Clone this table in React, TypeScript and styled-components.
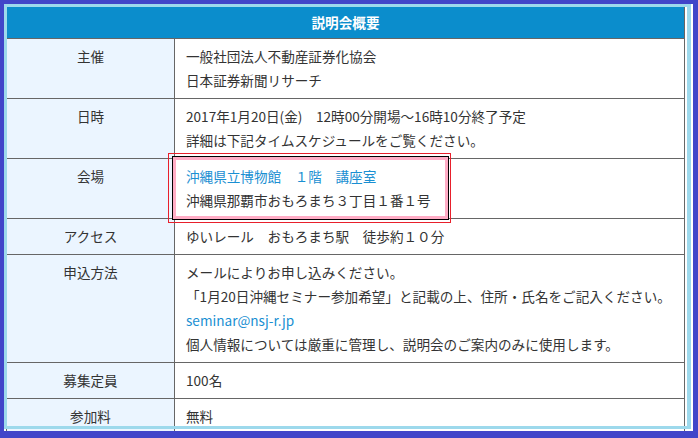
import React from "react";
import styled, { createGlobalStyle } from "styled-components";

const Global = createGlobalStyle`
  html, body { margin: 0; padding: 0; }
  body {
    background: #4145c9;
    font-family: "Noto Sans CJK JP", "Noto Sans", sans-serif;
  }
`;

const Frame = styled.div`
  width: 698px;
  height: 438px;
  box-sizing: border-box;
  background: #4145c9;
  padding: 4px 5px 7px 4px;
`;

const Viewport = styled.div`
  position: relative;
  width: 689px;
  height: 427px;
  background: #ffffff;
  overflow: hidden;
`;

const Ring = styled.div`
  position: absolute;
  left: 0;
  top: 0;
  width: 687px;
  height: 425px;
  box-sizing: border-box;
  border: 3px solid #9dd9ec;
  border-right-width: 4px;
  pointer-events: none;
`;

const Table = styled.table`
  margin: 2px 0 0 2px;
  width: 679px;
  border-collapse: collapse;
  font-size: 13.6px;
  color: #333333;
  border: 1px solid #666666;
`;

const HeadCell = styled.th`
  background: #0b8dcc;
  color: #ffffff;
  font-weight: bold;
  text-align: center;
  line-height: 24px;
  padding: 3px 0 4px;
  border: 1px solid #666666;
`;

const Label = styled.th`
  width: 145px;
  background: #ebf5ff;
  font-weight: normal;
  text-align: center;
  vertical-align: top;
  line-height: 24px;
  padding: 5px 11px 6px;
  border: 1px solid #666666;
`;

const Value = styled.td`
  background: #ffffff;
  text-align: left;
  vertical-align: top;
  line-height: 24px;
  padding: 5px 11px 6px;
  border: 1px solid #666666;
`;

const Line = styled.div<{ $link?: boolean }>`
  color: ${(p) => (p.$link ? "#1a8fd2" : "#333333")};
  white-space: nowrap;
`;

const Highlight = styled.div`
  position: relative;
  display: inline-block;

  &::before {
    content: "";
    position: absolute;
    left: -13px;
    right: -17px;
    top: -7px;
    bottom: -7px;
    border: 3px solid #ffadc6;
    box-shadow: 0 0 0 1px #000000;
    pointer-events: none;
  }

  &::after {
    content: "";
    position: absolute;
    left: -18px;
    right: -20px;
    top: -11px;
    bottom: -11px;
    border: 1px solid #e8202c;
    pointer-events: none;
  }
`;

type Row = { label: string; lines: { text: string; link?: boolean }[]; highlight?: boolean };

const rows: Row[] = [
  { label: "主催", lines: [{ text: "一般社団法人不動産証券化協会" }, { text: "日本証券新聞リサーチ" }] },
  {
    label: "日時",
    lines: [
      { text: "2017年1月20日(金)　12時00分開場～16時10分終了予定" },
      { text: "詳細は下記タイムスケジュールをご覧ください。" },
    ],
  },
  {
    label: "会場",
    highlight: true,
    lines: [
      { text: "沖縄県立博物館　１階　講座室", link: true },
      { text: "沖縄県那覇市おもろまち３丁目１番１号" },
    ],
  },
  { label: "アクセス", lines: [{ text: "ゆいレール　おもろまち駅　徒歩約１０分" }] },
  {
    label: "申込方法",
    lines: [
      { text: "メールによりお申し込みください。" },
      { text: "「1月20日沖縄セミナー参加希望」と記載の上、住所・氏名をご記入ください。" },
      { text: "seminar@nsj-r.jp", link: true },
      { text: "個人情報については厳重に管理し、説明会のご案内のみに使用します。" },
    ],
  },
  { label: "募集定員", lines: [{ text: "100名" }] },
  { label: "参加料", lines: [{ text: "無料" }] },
];

export default function App() {
  return (
    <>
      <Global />
      <Frame>
        <Viewport>
          <Table>
            <thead>
              <tr>
                <HeadCell colSpan={2}>説明会概要</HeadCell>
              </tr>
            </thead>
            <tbody>
              {rows.map((r) => {
                const content = r.lines.map((l, i) => (
                  <Line key={i} $link={l.link}>
                    {l.text}
                  </Line>
                ));
                return (
                  <tr key={r.label}>
                    <Label>{r.label}</Label>
                    <Value>{r.highlight ? <Highlight>{content}</Highlight> : content}</Value>
                  </tr>
                );
              })}
            </tbody>
          </Table>
          <Ring />
        </Viewport>
      </Frame>
    </>
  );
}
